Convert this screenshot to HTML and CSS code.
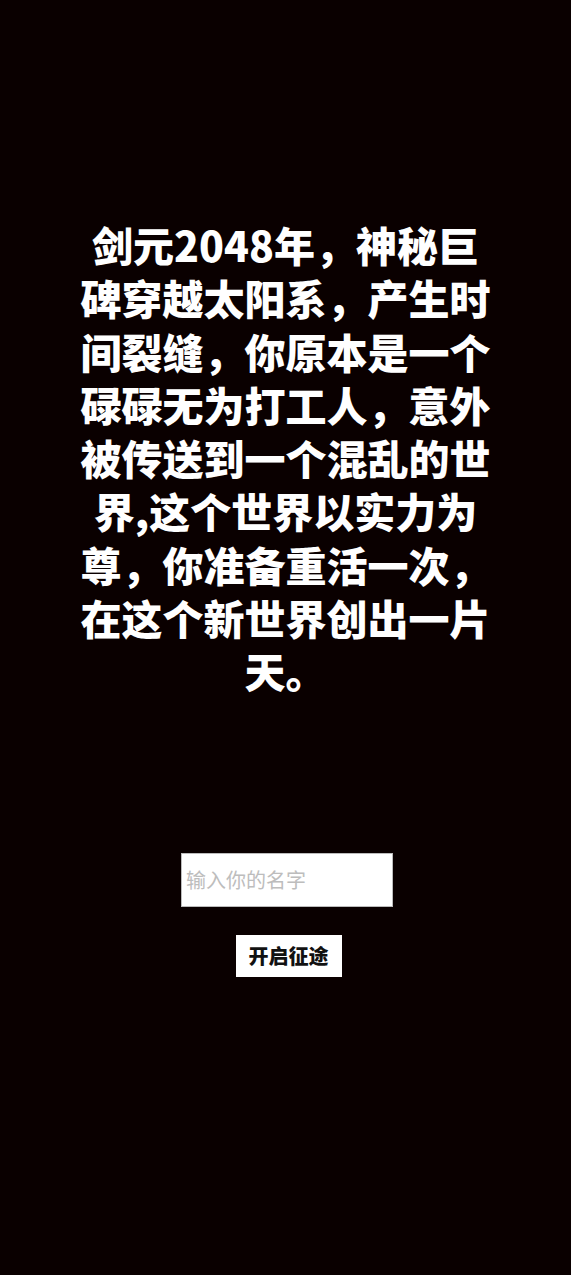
FILE: index.html
```html
<!DOCTYPE html>
<html lang="zh-CN">
<head>
  <meta charset="UTF-8" />
  <meta name="viewport" content="width=device-width, initial-scale=1.0" />
  <title>剑元2048</title>
  <link rel="stylesheet" href="styles.css">
</head>
<body>
  <div class="intro">
    <p class="story">剑元2048年，神秘巨碑穿越太阳系，产生时间裂缝，你原本是一个碌碌无为打工人，意外被传送到一个混乱的世界,这个世界以实力为尊，你准备重活一次，在这个新世界创出一片天。</p>
    <input type="text" id="name" class="name-input" placeholder="输入你的名字" />
    <button id="start" class="start-btn">开启征途</button>
  </div>
</body>
</html>
```

FILE: styles.css
```css
body {
  margin: 0;
  background: #0a0000;
  font-family: 'Noto Sans CJK SC', 'Noto Sans', sans-serif;
  min-height: 100vh;
}

.intro {
  display: flex;
  flex-direction: column;
  align-items: center;
  padding-top: 218px;
}

.story {
  margin: 0;
  width: 416px;
  color: #fff;
  font-size: 41px;
  font-weight: 900;
  line-height: 53.3px;
  text-align: center;
}

.name-input {
  margin-top: 155px;
  margin-left: 3px;
  width: 212px;
  height: 54px;
  box-sizing: border-box;
  padding: 0 4px;
  border: 1px solid #bbb;
  background: #fff;
  font-family: inherit;
  font-size: 20px;
  outline: none;
}

.name-input::placeholder {
  color: #bdbdbd;
}

.start-btn {
  margin-top: 28px;
  margin-left: 6px;
  width: 106px;
  height: 42px;
  border: none;
  background: #fff;
  color: #111;
  font-family: inherit;
  font-size: 20px;
  font-weight: 900;
  cursor: pointer;
}
```
